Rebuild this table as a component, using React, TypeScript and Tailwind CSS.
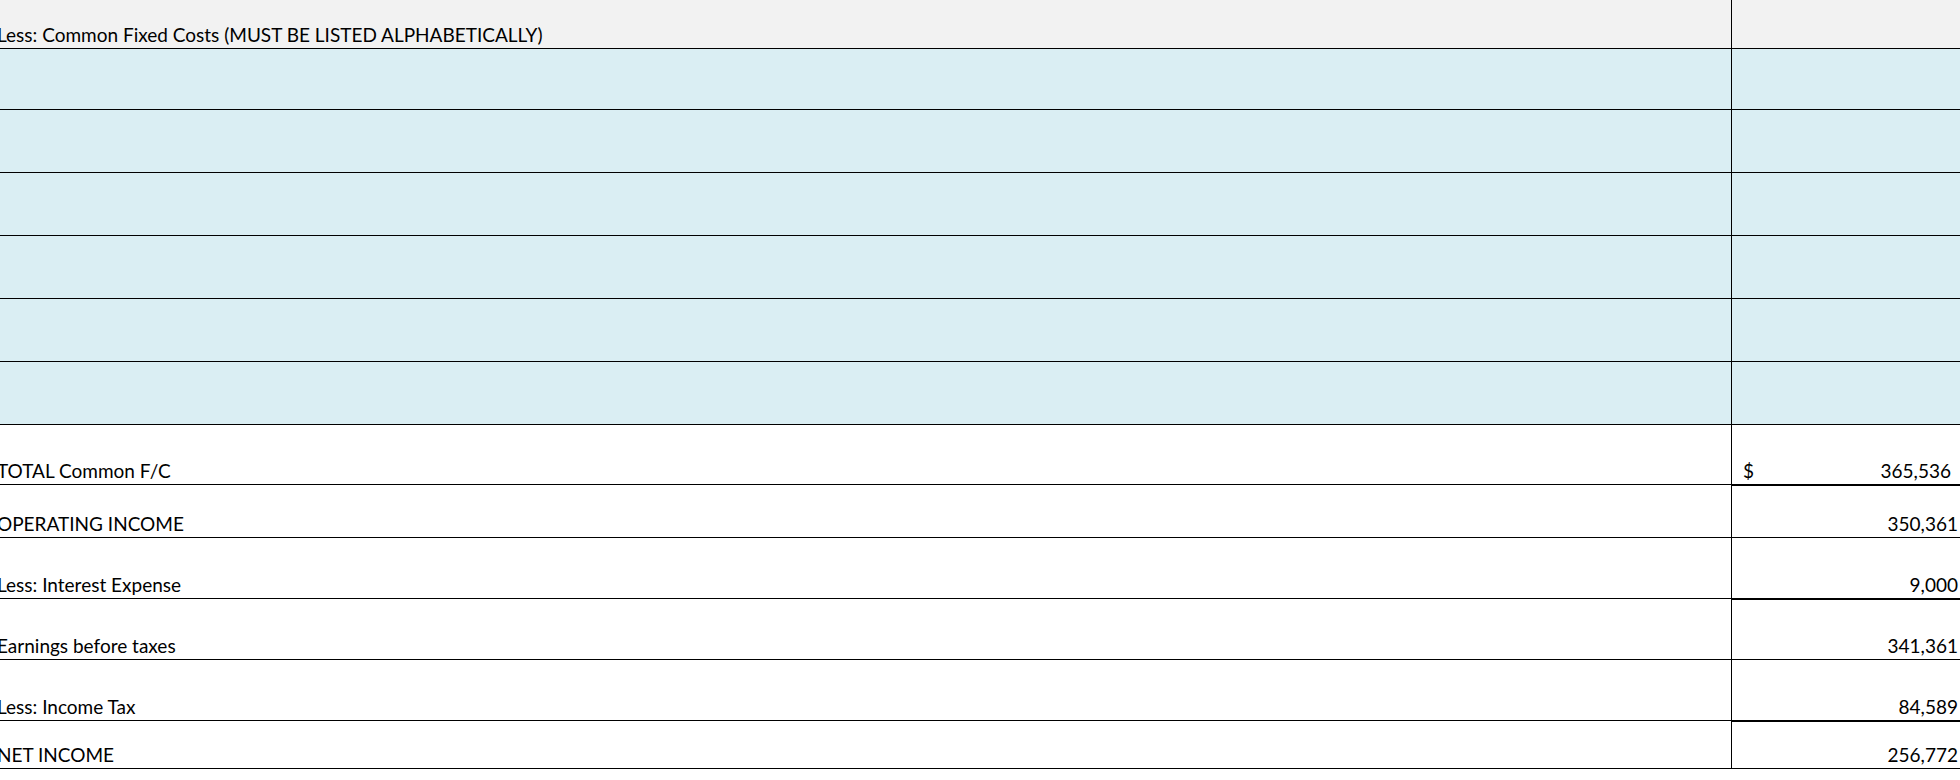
import React from "react";

type Row = {
  label?: string;
  value?: string;
  dollar?: boolean;
  h: string;
  bg: string;
  thick?: boolean;
  padRight?: string;
};

const rows: Row[] = [
  { label: "Less: Common Fixed Costs (MUST BE LISTED ALPHABETICALLY)", h: "h-[49px]", bg: "bg-[#f2f2f2]" },
  { h: "h-[61px]", bg: "bg-[#daeef3]" },
  { h: "h-[63px]", bg: "bg-[#daeef3]" },
  { h: "h-[63px]", bg: "bg-[#daeef3]" },
  { h: "h-[63px]", bg: "bg-[#daeef3]" },
  { h: "h-[63px]", bg: "bg-[#daeef3]" },
  { h: "h-[63px]", bg: "bg-[#daeef3]" },
  { label: "TOTAL Common F/C", value: "365,536", dollar: true, h: "h-[60px]", bg: "", thick: true, padRight: "pr-[9px]" },
  { label: "OPERATING INCOME", value: "350,361", h: "h-[53px]", bg: "" },
  { label: "Less: Interest Expense", value: "9,000", h: "h-[61px]", bg: "", thick: true },
  { label: "Earnings before taxes", value: "341,361", h: "h-[61px]", bg: "" },
  { label: "Less: Income Tax", value: "84,589", h: "h-[61px]", bg: "", thick: true },
  { label: "NET INCOME", value: "256,772", h: "h-[48px]", bg: "" },
];

export default function App() {
  return (
    <div className="w-[1960px] h-[780px] bg-white overflow-hidden text-black font-['Lato',sans-serif] text-[19px] leading-[19px]">
      {rows.map((r, i) => (
        <div key={i} className={`grid grid-cols-[1732px_1fr] ${r.h}`}>
          <div className={`${r.bg} border-r border-b border-black flex items-end pb-[4px] overflow-hidden whitespace-nowrap`}>
            <span className="-ml-[3px]">{r.label ?? ""}</span>
          </div>
          <div
            className={`${r.bg} border-b border-black flex items-end justify-between pb-[4px] pl-[11px] ${r.padRight ?? "pr-[2px]"} whitespace-nowrap ${r.thick ? "shadow-[0_1px_0_#000]" : ""}`}
          >
            <span>{r.dollar ? "$" : ""}</span>
            <span>{r.value ?? ""}</span>
          </div>
        </div>
      ))}
    </div>
  );
}
